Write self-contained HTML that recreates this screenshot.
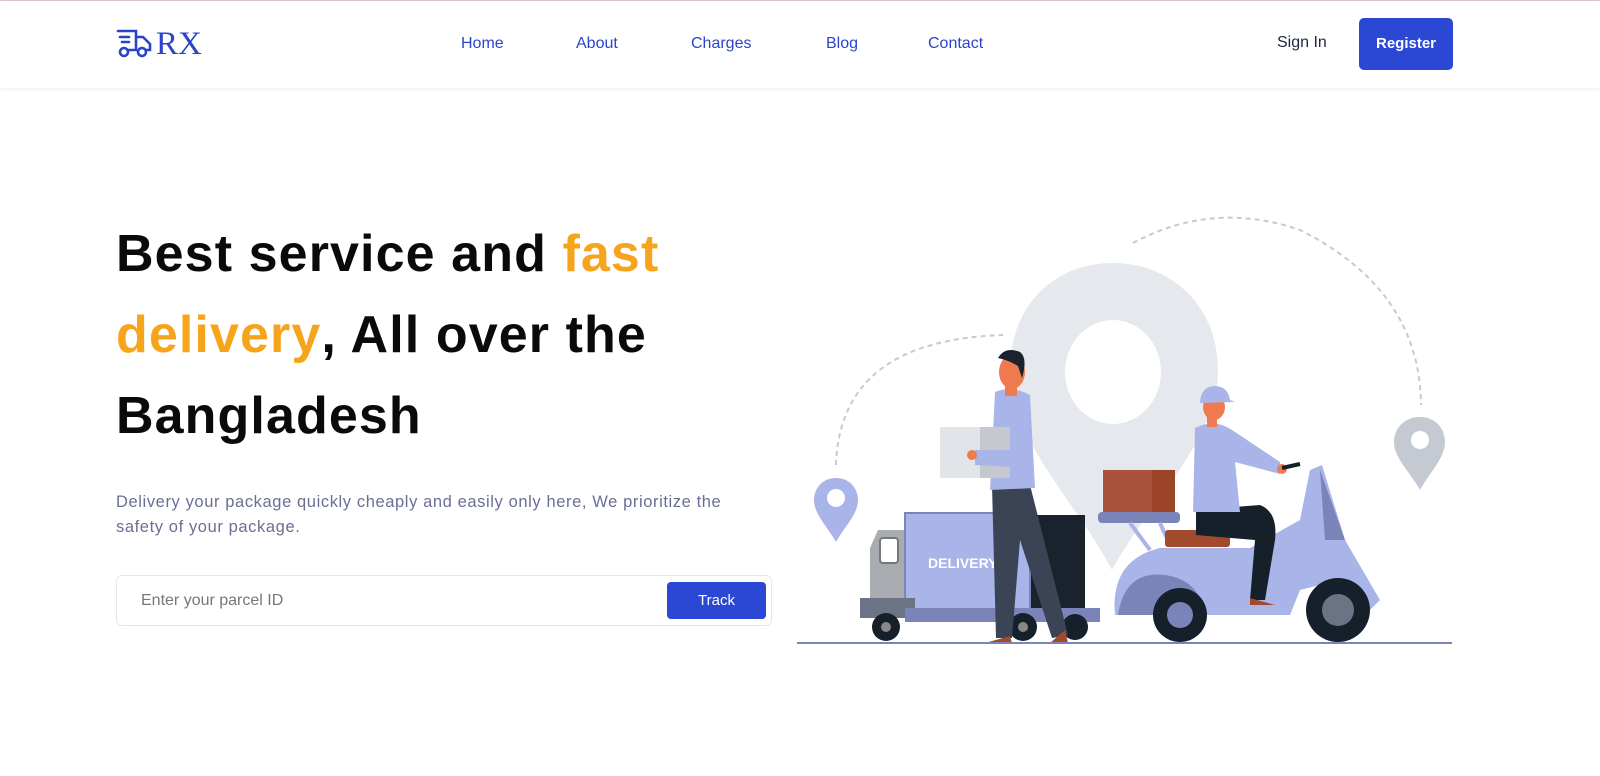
<!DOCTYPE html>
<html><head><meta charset="utf-8"><style>
*{margin:0;padding:0;box-sizing:border-box}
body{width:1600px;height:776px;background:#fff;font-family:"Liberation Sans",sans-serif;position:relative;overflow:hidden}
.top{position:absolute;left:0;top:0;width:1600px;height:1px;background:#d8c8cc}
nav{position:absolute;left:0;top:1px;width:1600px;height:87px;background:#fff;box-shadow:0 2px 4px rgba(0,0,0,.06)}
.logo{position:absolute;left:116px;top:27px;display:flex;align-items:center}
.logo span{font-family:"Liberation Serif",serif;font-size:33px;color:#2b45c9;margin-left:2px;line-height:32px}
.links a{position:absolute;top:34px;font-size:16px;color:#2b45c9;text-decoration:none}
.signin{position:absolute;left:1277px;top:33px;font-size:16px;color:#1e2540}
.reg{position:absolute;left:1359px;top:17px;width:94px;height:52px;background:#2b48d4;border-radius:5px;color:#fff;font-size:15px;font-weight:bold;text-align:center;line-height:52px}
h1{position:absolute;left:116px;top:214px;font-size:52px;line-height:81px;font-weight:bold;color:#0a0a0a;letter-spacing:1.1px}
h1 b{color:#f7a41d}
p{position:absolute;left:116px;top:490px;font-size:16.5px;line-height:25px;color:#6b6f93;width:640px;letter-spacing:.6px}
.box{position:absolute;left:116px;top:575px;width:656px;height:51px;border:1px solid #e6e6e6;border-radius:6px}
.box span{position:absolute;left:24px;top:16px;font-size:16px;color:#777}
.track{position:absolute;left:550px;top:6px;width:99px;height:37px;background:#2b48d4;border-radius:4px;color:#fff;font-size:15px;text-align:center;line-height:37px}
svg.ill{position:absolute;left:0;top:0}
</style></head><body>
<div class="top"></div>
<nav>
<div class="logo"><svg width="38" height="32" viewBox="0 0 38 32" fill="none" stroke="#2b45c9" stroke-width="2.6" stroke-linecap="round"><path d="M2 3h18v19M20 9h7l7 7v6h-4M12 22h6"/><path d="M4 9h9M6 14h7"/><circle cx="8" cy="24" r="4"/><circle cx="26" cy="24" r="4"/></svg><span>RX</span></div>
<div class="links"><a style="left:461px">Home</a><a style="left:576px">About</a><a style="left:691px">Charges</a><a style="left:826px">Blog</a><a style="left:928px">Contact</a></div>
<div class="signin">Sign In</div>
<div class="reg">Register</div>
</nav>
<h1>Best service and <b>fast</b><br><b>delivery</b>, All over the<br>Bangladesh</h1>
<p>Delivery your package quickly cheaply and easily only here, We prioritize the safety of your package.</p>
<div class="box"><span>Enter your parcel ID</span><div class="track">Track</div></div>
<svg class="ill" width="1600" height="776" viewBox="0 0 1600 776">
<g fill="none" stroke="#c5cad3" stroke-width="2" stroke-dasharray="5 4">
<path d="M1133 243 Q1213 200 1300 230 Q1420 290 1421 405"/>
<path d="M836 465 Q840 340 1003 335"/>
</g>
<path d="M1113 263 C1170 263 1218 305 1218 370 C1218 440 1150 500 1112 570 C1075 500 1010 440 1010 370 C1010 305 1055 263 1113 263Z" fill="#e5e9ed"/>
<ellipse cx="1113" cy="372" rx="48" ry="52" fill="#fff"/>
<path d="M836 478 C850 478 858 489 858 500 C858 514 845 526 836 542 C827 526 814 514 814 500 C814 489 822 478 836 478Z" fill="#a9b4e8"/>
<circle cx="836" cy="498" r="9" fill="#fff"/>
<path d="M1420 417 C1435 417 1445 428 1445 442 C1445 458 1430 472 1420 490 C1410 472 1394 458 1394 442 C1394 428 1405 417 1420 417Z" fill="#c4c9d2"/>
<circle cx="1420" cy="440" r="9" fill="#fff"/>
<rect x="1028" y="515" width="57" height="95" fill="#1a222e"/>
<path d="M878 530 H906 V600 H870 V548 Z" fill="#a8abb0"/>
<rect x="880" y="538" width="18" height="25" rx="3" fill="#fff" stroke="#777" stroke-width="2"/>
<rect x="905" y="513" width="125" height="97" fill="#a9b4e8" stroke="#7a84b8" stroke-width="2"/>
<text x="928" y="568" font-family="Liberation Sans" font-weight="bold" font-size="14" fill="#fff">DELIVERY</text>
<rect x="860" y="598" width="55" height="20" fill="#6b7385"/>
<rect x="905" y="608" width="195" height="14" fill="#7a84b8"/>
<circle cx="886" cy="627" r="14" fill="#15202b"/><circle cx="886" cy="627" r="5" fill="#888"/>
<circle cx="1023" cy="627" r="14" fill="#15202b"/><circle cx="1023" cy="627" r="5" fill="#888"/>
<circle cx="1075" cy="627" r="13" fill="#15202b"/>
<path d="M992 485 L1030 485 L1068 635 L1052 638 L1020 540 L1012 638 L996 638 Z" fill="#3a4455"/>
<path d="M995 392 Q1012 385 1030 395 L1035 488 L990 490 Z" fill="#a9b4e8"/>
<rect x="940" y="427" width="40" height="51" fill="#e1e4e8"/><rect x="980" y="427" width="30" height="51" fill="#c5c8ce"/>
<path d="M975 450 L1025 450 L1030 468 L975 465Z" fill="#a9b4e8"/>
<circle cx="972" cy="455" r="5" fill="#f07a50"/>
<rect x="1005" y="380" width="12" height="16" fill="#f07a50"/>
<ellipse cx="1012" cy="372" rx="13" ry="17" fill="#f07a50"/>
<path d="M998 358 Q1005 346 1020 352 Q1028 358 1022 378 L1018 366 Q1008 360 998 358Z" fill="#1a222e"/>
<path d="M985 643 L1010 636 L1012 643Z M1050 643 L1065 630 L1068 643Z" fill="#a24a2d"/>
<rect x="1103" y="470" width="72" height="43" fill="#a9543a"/><rect x="1152" y="470" width="23" height="43" fill="#9c4528"/>
<rect x="1098" y="512" width="82" height="11" rx="4" fill="#7a84b8"/>
<path d="M1130 523 L1150 550 M1160 523 L1170 545" stroke="#a9b4e8" stroke-width="4"/>
<path d="M1115 615 Q1110 560 1160 548 L1250 548 L1300 520 L1310 470 L1322 465 L1345 540 L1380 600 L1370 610 L1340 580 L1300 590 L1290 615 Z" fill="#a9b4e8"/>
<path d="M1118 615 Q1125 570 1165 575 Q1200 580 1205 615 Z" fill="#7a84b8"/>
<path d="M1320 470 L1345 540 L1325 540 Z" fill="#7a84b8"/>
<circle cx="1180" cy="615" r="27" fill="#15202b"/><circle cx="1180" cy="615" r="13" fill="#7a84b8"/>
<circle cx="1338" cy="610" r="32" fill="#15202b"/><circle cx="1338" cy="610" r="16" fill="#6b7385"/>
<rect x="1165" y="530" width="65" height="17" rx="3" fill="#a24a2d"/>
<path d="M1196 510 L1260 505 Q1278 512 1275 540 L1265 600 L1250 600 L1255 540 L1196 535Z" fill="#15202b"/>
<path d="M1250 598 L1275 605 L1250 605Z" fill="#a24a2d"/>
<path d="M1195 428 Q1215 418 1232 430 L1280 462 L1280 474 L1235 462 L1240 512 L1193 512 Z" fill="#a9b4e8"/>
<circle cx="1282" cy="469" r="5" fill="#f07a50"/>
<path d="M1282 468 L1300 464" stroke="#15202b" stroke-width="4"/>
<rect x="1207" y="413" width="10" height="14" fill="#f07a50"/>
<ellipse cx="1214" cy="407" rx="11" ry="13" fill="#f07a50"/>
<path d="M1200 402 Q1201 386 1216 386 Q1228 387 1230 400 L1235 402 L1200 403Z" fill="#a9b4e8"/>
<line x1="797" y1="643" x2="1452" y2="643" stroke="#7a84b8" stroke-width="2"/>
</svg>
</body></html>
